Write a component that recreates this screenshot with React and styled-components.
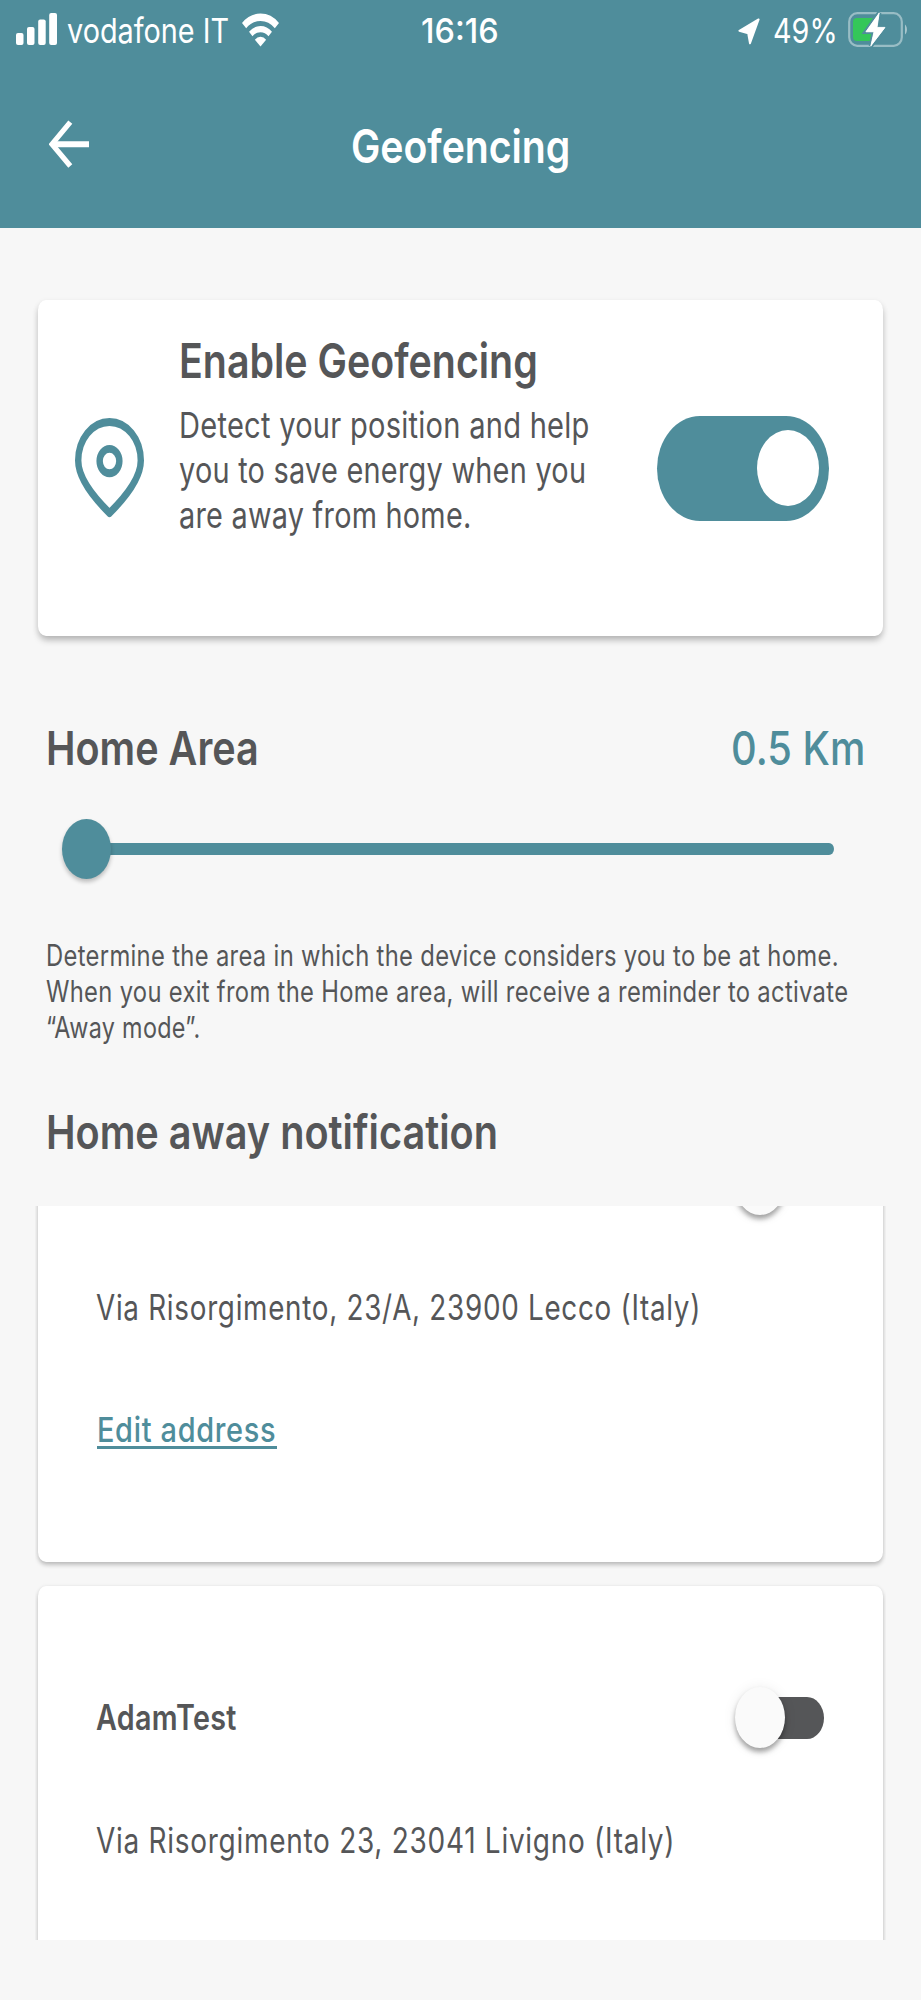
import React, { useLayoutEffect, useRef, useState } from 'react';
import styled, { createGlobalStyle } from 'styled-components';

const TEAL = '#4f8d9b';
const INK = '#555658';

const GlobalStyle = createGlobalStyle`
  *, *::before, *::after { box-sizing: border-box; }
  body { margin: 0; background: #f7f7f7; }
`;

const Screen = styled.div`
  width: 921px;
  height: 2000px;
  overflow: hidden;
  background: #f7f7f7;
  color: ${INK};
  font-family: Inter, Roboto, sans-serif;
`;

/* Condensed line of text: the glyphs are squeezed to the given width. */
const LineBox = styled.span`
  display: block;
  width: ${(p) => p.$w}px;
  white-space: nowrap;
  font-size: ${(p) => p.$size}px;
  line-height: ${(p) => p.$lh}px;
  font-weight: ${(p) => p.$weight || 400};
  letter-spacing: ${(p) => p.$ls || 0}px;
`;
const LineText = styled.span`
  display: inline-block;
  transform-origin: 0 50%;
`;

function Line({ w, size, lh, weight, ls, children }) {
  const ref = useRef(null);
  const [scale, setScale] = useState(0.8);
  useLayoutEffect(() => {
    setScale(w / ref.current.offsetWidth);
  }, [w, children]);
  return (
    <LineBox $w={w} $size={size} $lh={lh} $weight={weight} $ls={ls}>
      <LineText ref={ref} style={{ transform: `scaleX(${scale})` }}>{children}</LineText>
    </LineBox>
  );
}

const Header = styled.header`
  height: 228px;
  background: ${TEAL};
  color: #fff;
`;
const StatusBar = styled.div`
  display: grid;
  grid-template-columns: 1fr auto 1fr;
  height: 61px;
  padding: 0 13px 0 16px;
`;
const StatusGroup = styled.div`
  display: flex;
  align-items: flex-start;
  justify-content: ${(p) => (p.$end ? 'flex-end' : 'flex-start')};
`;
const Glyph = styled.svg`
  display: block;
  flex: none;
  width: ${(p) => p.$w}px;
  height: ${(p) => p.$h}px;
  margin: ${(p) => p.$m || 0};
`;
const Carrier = styled.div`
  margin-left: 10px;
`;
const Clock = styled.div`
  padding-right: 4px;
`;
const BatteryLevel = styled.div`
  margin-left: 13px;
  margin-right: 1px;
`;
const NavBar = styled.div`
  display: grid;
  grid-template-columns: 1fr auto 1fr;
  align-items: start;
  padding-left: 49px;
  padding-right: 49px;
`;
const BackButton = styled.button`
  width: 41px;
  margin-top: 59px;
  padding: 0;
  border: 0;
  background: none;
  color: inherit;
`;

const Card = styled.section`
  border-radius: 8px / 10px;
  background: #fff;
  box-shadow: 0 5px 7px -1px rgba(0, 0, 0, 0.24), 0 2px 6px rgba(0, 0, 0, 0.08);
`;
const EnableCard = styled(Card)`
  display: flex;
  align-items: center;
  height: 336px;
  margin: 72px 38px 0;
  padding: 0 54.5px 0 37px;
`;
const EnableText = styled.div`
  flex: 1;
  align-self: flex-start;
  padding: 31px 0 0 34.5px;
`;
const Description = styled.div`
  margin-top: 12px;
`;
const Toggle = styled.div`
  display: flex;
  align-items: center;
  justify-content: flex-end;
  width: 172px;
  height: 105px;
  padding-right: 9.5px;
  border-radius: 43px / 52.5px;
  background: ${TEAL};
`;
const ToggleKnob = styled.span`
  width: 62px;
  height: 76px;
  border-radius: 50%;
  background: #fff;
`;

const Settings = styled.section`
  padding: 82px 56px 0 46px;
`;
const AreaRow = styled.div`
  display: flex;
  justify-content: space-between;
`;
const AreaValue = styled.span`
  color: ${TEAL};
`;
const Slider = styled.div`
  display: flex;
  align-items: center;
  height: 60px;
  margin: 41px 31px 0 16px;
`;
const SliderThumb = styled.span`
  z-index: 1;
  width: 49px;
  height: 60px;
  border-radius: 50%;
  background: ${TEAL};
  box-shadow: 0 3px 4px rgba(0, 0, 0, 0.24);
`;
const SliderTrack = styled.span`
  flex: 1;
  height: 12px;
  margin-left: -10px;
  border-radius: 5px / 6px;
  background: ${TEAL};
`;
const Note = styled.div`
  margin: 58px 0 56px;
`;

const List = styled.div`
  height: 734px;
  margin: 44px 35px 0;
  padding: 0 3px;
  overflow: hidden;
`;
const ListTrack = styled.div`
  display: flex;
  flex-direction: column;
  gap: 24px;
  margin-top: -153px;
`;
const PlaceCard = styled(Card)`
  flex: none;
  height: 509px;
  padding: 101px 59px 0 57.5px;
  box-shadow: 0 3px 4px rgba(0, 0, 0, 0.22), 0 0 4px rgba(0, 0, 0, 0.06);
`;
const PlaceHead = styled.div`
  display: flex;
  align-items: center;
  justify-content: space-between;
  height: 61px;
`;
const PlaceAddress = styled.div`
  margin-top: 70px;
`;
const EditLink = styled.a`
  display: block;
  width: 180px;
  height: 41px;
  margin: 79px 0 0 1.5px;
  border-bottom: 3px solid ${TEAL};
  color: ${TEAL};
`;
const Switch = styled.div`
  display: flex;
  align-items: center;
  width: 89px;
  height: 61px;
  margin-left: auto;
`;
const SwitchKnob = styled.span`
  z-index: 1;
  flex: none;
  width: 50px;
  height: 61px;
  border-radius: 50%;
  background: #fafafa;
  box-shadow: 0 4px 5px rgba(0, 0, 0, 0.34), 0 1px 14px rgba(0, 0, 0, 0.08);
`;
const SwitchTrack = styled.span`
  flex: 1;
  height: 42px;
  margin-left: -42px;
  border-radius: 17px / 21px;
  background: ${INK};
`;

const SignalIcon = () => (
  <Glyph $w={41} $h={32} $m="13px 0 0" viewBox="0 0 41 32" fill="currentColor">
    <rect x="0" y="20" width="7.5" height="12" rx="2" />
    <rect x="11" y="14" width="7.5" height="18" rx="2" />
    <rect x="22.2" y="6.5" width="7.5" height="25.5" rx="2" />
    <rect x="33.2" y="0" width="7.8" height="32" rx="2" />
  </Glyph>
);

const WifiIcon = () => (
  <Glyph $w={37} $h={34} $m="13px 0 0 12.5px" viewBox="0 0 46 34" preserveAspectRatio="none" fill="none" stroke="currentColor">
    <path d="M2.6 12.6A29.25 29.25 0 0 1 43.4 12.6" strokeWidth="7.4" />
    <path d="M10.9 20.9A17.5 17.5 0 0 1 35.1 20.9" strokeWidth="6.2" />
    <path d="M23 33.6L16 26.8A9.6 9.6 0 0 1 30 26.8Z" fill="currentColor" stroke="none" />
  </Glyph>
);

const LocationIcon = () => (
  <Glyph $w={22} $h={27} $m="18px 0 0" viewBox="0 0 22 27" fill="currentColor" stroke="currentColor" strokeWidth="2" strokeLinejoin="round">
    <path d="M20.6 1.4L1.4 12.8L10.2 15.2L12 25.2Z" />
  </Glyph>
);

const BatteryIcon = () => (
  <Glyph $w={60} $h={36} $m="12px 0 0 9px" viewBox="0 0 60 36">
    <rect x="1.2" y="1.2" width="52.6" height="32.6" rx="8" ry="8.5" fill="none" stroke="#fff" strokeOpacity="0.42" strokeWidth="2.2" />
    <path d="M57 12.5C59.6 14.5 59.6 20.5 57 22.5Z" fill="#fff" fillOpacity="0.5" />
    <rect x="5" y="6" width="23" height="23" rx="4" fill="#34c759" />
    <path
      d="M31.2 1L17.9 19.8L26 19.8L22.8 34L37 15.4L29 15.4Z"
      fill="#fff"
      stroke={TEAL}
      strokeWidth="4.5"
      paintOrder="stroke"
    />
    <path d="M31.2 1L17.9 19.8L26 19.8L22.8 34L37 15.4L29 15.4Z" fill="#fff" stroke="#fff" strokeWidth="0.8" strokeLinejoin="round" />
  </Glyph>
);

const BackIcon = () => (
  <Glyph $w={41} $h={48} viewBox="0 0 41 48" fill="none" stroke="currentColor">
    <path d="M40 24.3H4" strokeWidth="6" />
    <path d="M21.3 2.2L3 24.2L21.3 46" strokeWidth="5.2" />
  </Glyph>
);

const PinIcon = () => (
  <Glyph $w={69} $h={100} viewBox="0 0 86 101" preserveAspectRatio="none" fill="none" stroke={TEAL} strokeWidth="8">
    <path d="M43 96C33 88 4 65 4 43A39 39 0 0 1 82 43C82 65 53 88 43 96Z" strokeLinejoin="round" />
    <circle cx="43" cy="43.5" r="12.3" />
  </Glyph>
);

function Place({ name, address, addressWidth, editable }) {
  return (
    <PlaceCard>
      <PlaceHead>
        {name && <Line w={141} size={35} lh={43} weight={600} ls={0.4}>{name}</Line>}
        <Switch role="switch" aria-checked="false">
          <SwitchKnob />
          <SwitchTrack />
        </Switch>
      </PlaceHead>
      <PlaceAddress>
        <Line w={addressWidth} size={35} lh={44} ls={0.9}>{address}</Line>
      </PlaceAddress>
      {editable && (
        <EditLink>
          <Line w={179.5} size={34.5} lh={44} weight={550} ls={0.8}>Edit address</Line>
        </EditLink>
      )}
    </PlaceCard>
  );
}

export default function App() {
  return (
    <>
      <GlobalStyle />
      <Screen>
        <Header>
          <StatusBar>
            <StatusGroup>
              <SignalIcon />
              <Carrier><Line w={162} size={34.5} lh={62}>vodafone IT</Line></Carrier>
              <WifiIcon />
            </StatusGroup>
            <Clock><Line w={78} size={34.5} lh={62} weight={550}>16:16</Line></Clock>
            <StatusGroup $end>
              <LocationIcon />
              <BatteryLevel><Line w={65} size={34.5} lh={62}>49%</Line></BatteryLevel>
              <BatteryIcon />
            </StatusGroup>
          </StatusBar>
          <NavBar>
            <BackButton aria-label="Back"><BackIcon /></BackButton>
            <Line w={219} size={46.5} lh={170} weight={570}>Geofencing</Line>
          </NavBar>
        </Header>

        <EnableCard>
          <PinIcon />
          <EnableText>
            <Line w={359} size={48} lh={60} weight={620}>Enable Geofencing</Line>
            <Description>
              <Line w={410.5} size={36} lh={45} ls={0.3}>Detect your position and help</Line>
              <Line w={407} size={36} lh={45} ls={0.3}>you to save energy when you</Line>
              <Line w={292.5} size={36} lh={45} ls={0.3}>are away from home.</Line>
            </Description>
          </EnableText>
          <Toggle role="switch" aria-checked="true"><ToggleKnob /></Toggle>
        </EnableCard>

        <Settings>
          <AreaRow>
            <Line w={213} size={47} lh={60} weight={560}>Home Area</Line>
            <AreaValue><Line w={134} size={47} lh={60} weight={530}>0.5 Km</Line></AreaValue>
          </AreaRow>
          <Slider>
            <SliderThumb />
            <SliderTrack />
          </Slider>
          <Note>
            <Line w={792.5} size={29.5} lh={36} ls={0.4}>Determine the area in which the device considers you to be at home.</Line>
            <Line w={802} size={29.5} lh={36} ls={0.4}>When you exit from the Home area, will receive a reminder to activate</Line>
            <Line w={154.5} size={29.5} lh={36} ls={0.4}>“Away mode”.</Line>
          </Note>
          <Line w={452} size={47} lh={61} weight={570}>Home away notification</Line>
        </Settings>

        <List>
          <ListTrack>
            <Place address="Via Risorgimento, 23/A, 23900 Lecco (Italy)" addressWidth={605} editable />
            <Place name="AdamTest" address="Via Risorgimento 23, 23041 Livigno (Italy)" addressWidth={579} />
          </ListTrack>
        </List>
      </Screen>
    </>
  );
}
